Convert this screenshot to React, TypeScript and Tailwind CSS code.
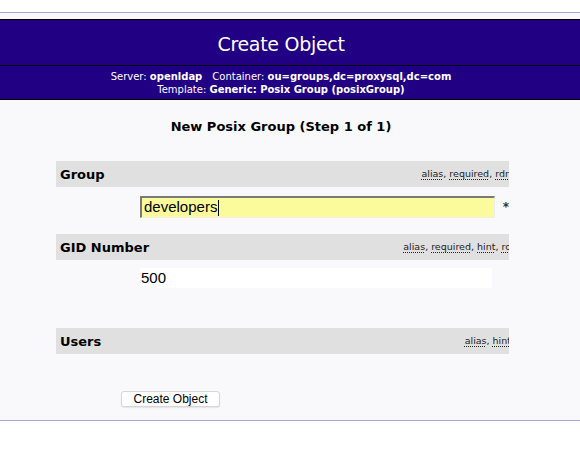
function Band({ label, tags }: { label: string; tags: string[] }) {
  return (
    <div className="flex h-[26px] items-center justify-between overflow-hidden bg-[#e0e0e0] pl-[4px]">
      <span className="text-[13px] font-bold leading-none text-black">{label}</span>
      <span className="-mr-[2px] whitespace-nowrap text-[9.5px] leading-none text-[#222]">
        {tags.map((t, i) => (
          <span key={t}>
            <span className="underline decoration-dotted underline-offset-2">{t}</span>
            {i < tags.length - 1 ? ", " : ""}
          </span>
        ))}
      </span>
    </div>
  );
}

function App() {
  return (
    <div className="h-[458px] bg-white font-['DejaVu_Sans',sans-serif]">
      <div className="h-[12px]" />
      <div className="border-y border-[#aca6d2] bg-[#f9f9fc] pt-[6px]">
        {/* page head */}
        <div className="border-y border-black bg-[#210083] text-white">
          <div className="flex h-[45px] items-center justify-center pr-[18px] pt-[3px] text-[19px] tracking-[-0.3px]">
            Create Object
          </div>
          <div className="h-[34px] border-t border-black pr-[18px] pt-[4px] text-center text-[10px] leading-[13px]">
            <div>
              Server: <b>openldap</b>
              <span className="inline-block w-[10px]" />
              Container: <b>ou=groups,dc=proxysql,dc=com</b>
            </div>
            <div>
              Template: <b>Generic: Posix Group (posixGroup)</b>
            </div>
          </div>
        </div>

        <div className="mt-[19px] pr-[18px] text-center text-[13px] font-bold leading-[16px] text-black">
          New Posix Group (Step 1 of 1)
        </div>

        <div className="ml-[56px] mt-[26px] w-[453px]">
          <Band label="Group" tags={["alias", "required", "rdn"]} />
          <div className="flex items-center pb-[16px] pl-[84px] pt-[9px]">
            <div className="flex h-[22px] w-[355px] items-center border-b border-l-2 border-r border-t-2 border-b-[#eeeeee] border-l-[#7a7a7a] border-r-[#eeeeee] border-t-[#7a7a7a] bg-[#fbfb9c] pl-[2px] font-['Liberation_Sans',sans-serif] text-[15px] text-black">
              developers
              <span className="ml-[1px] inline-block h-[16px] w-[1px] bg-black" />
            </div>
            <span className="ml-[8px] text-[12px] font-bold leading-none text-[#333]">*</span>
          </div>

          <Band label="GID Number" tags={["alias", "required", "hint", "ro"]} />
          <div className="pb-[40px] pl-[84px] pt-[8px]">
            <div className="flex h-[20px] w-[352px] items-center bg-white pl-[1px] font-['Liberation_Sans',sans-serif] text-[15px] text-black">
              500
            </div>
          </div>

          <Band label="Users" tags={["alias", "hint"]} />
        </div>

        <div className="pb-[13px] pl-[121px] pt-[37px]">
          <button className="flex h-[16px] w-[99px] items-center justify-center rounded-[3px] border border-[#d6d6d6] bg-white font-['Liberation_Sans',sans-serif] text-[12px] leading-none text-black shadow-[0_1px_1px_rgba(0,0,0,0.08)]">
            Create Object
          </button>
        </div>
      </div>
    </div>
  );
}

export default App;
